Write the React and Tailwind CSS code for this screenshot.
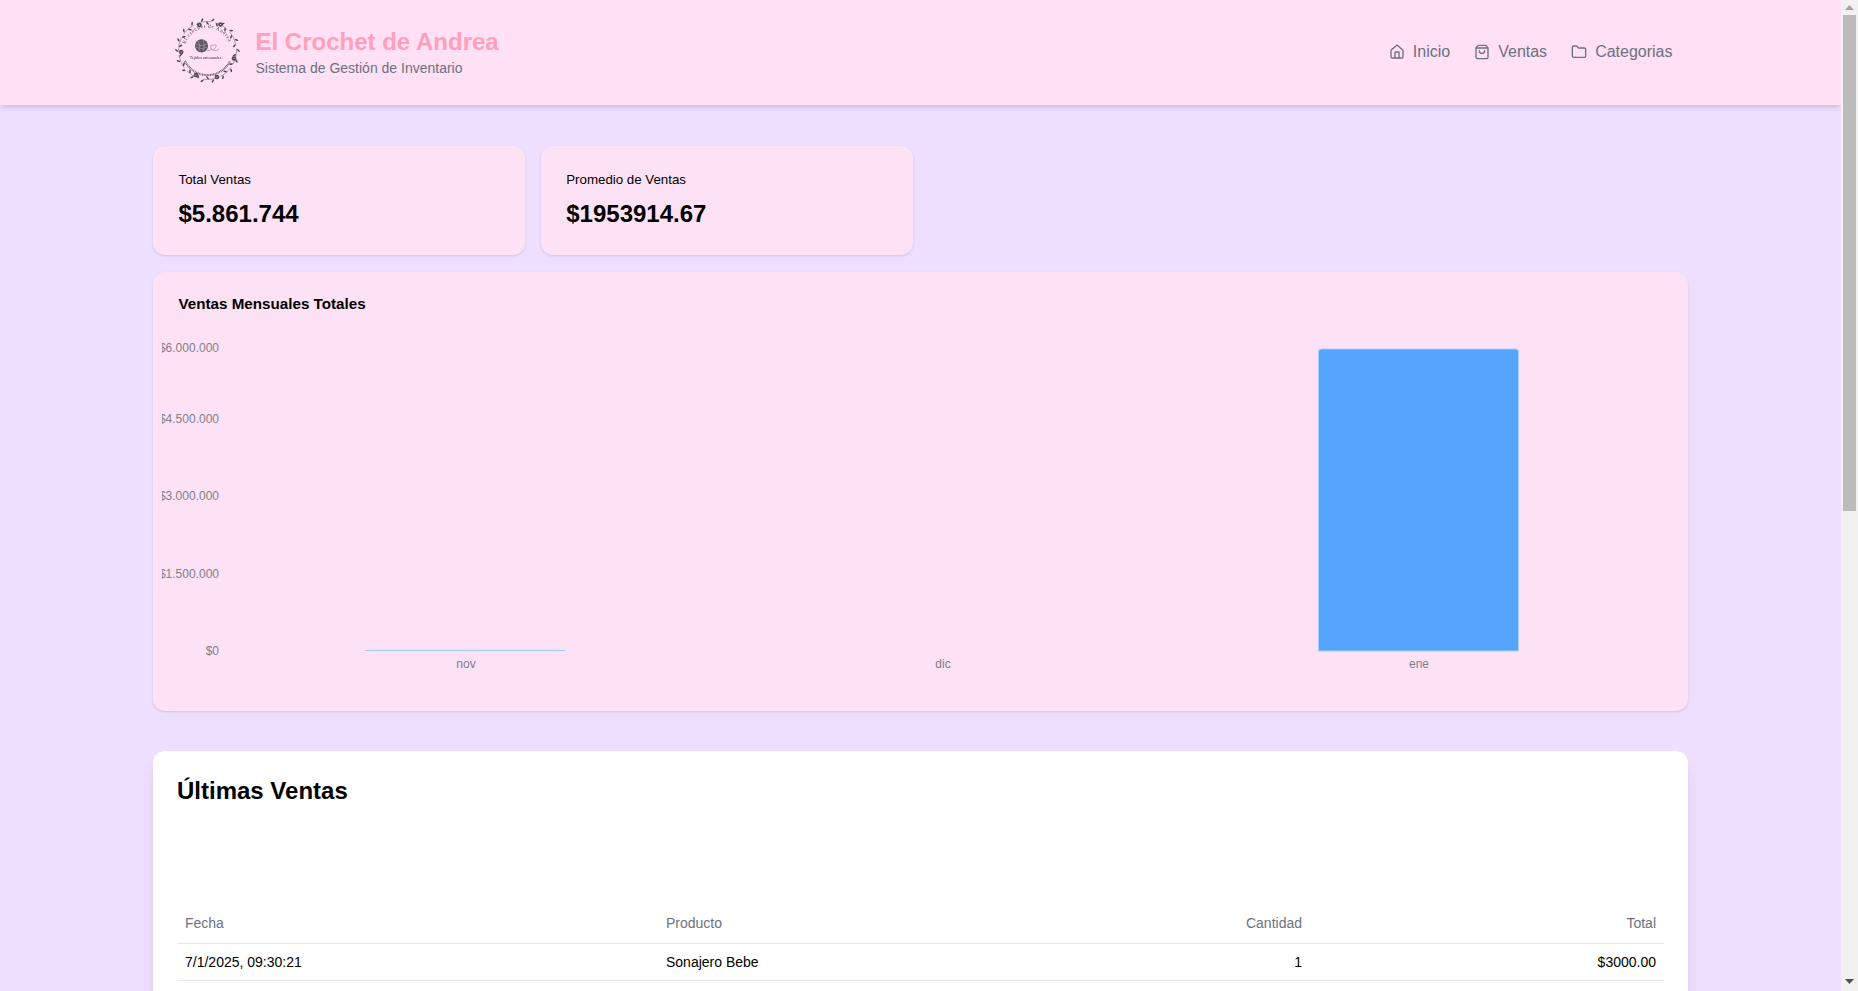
import React from "react";
import { House, ShoppingBag, Folder } from "lucide-react";

const font = { fontFamily: '"Liberation Sans", Arial, sans-serif' };

const navItems = [
  { name: "Inicio", icon: House },
  { name: "Ventas", icon: ShoppingBag },
  { name: "Categorias", icon: Folder },
];

const ventas = [
  { fecha: "7/1/2025, 09:30:21", producto: "Sonajero Bebe", cantidad: 1, total: "$3000.00" },
  { fecha: "6/1/2025, 18:12:44", producto: "Gorro de Lana", cantidad: 2, total: "$15000.00" },
  { fecha: "6/1/2025, 11:05:10", producto: "Bufanda Tejida", cantidad: 1, total: "$12000.00" },
  { fecha: "5/1/2025, 16:47:32", producto: "Amigurumi Conejo", cantidad: 1, total: "$18000.00" },
  { fecha: "4/1/2025, 10:20:05", producto: "Manta Bebe", cantidad: 1, total: "$35000.00" },
];

// wreath logo: thin branches with small leaves, flowers and the shop name
const Logo = () => {
  const leaves = Array.from({ length: 36 }, (_, i) => (i * 360) / 36);
  const flowers = [
    [30.5, 14],
    [51.5, 13.5],
    [12.2, 41],
    [65, 47.5],
    [27, 64],
    [48, 66],
  ];
  return (
    <svg viewBox="0 0 80 80" className="w-20 h-20 shrink-0 blur-[0.2px]">
      <defs>
        <path id="logoArcTop" d="M 16.5 33 A 23 23 0 0 1 60.5 33" />
      </defs>
      <circle cx="38.5" cy="39.5" r="29" fill="none" stroke="#5a5560" strokeWidth="0.5" strokeDasharray="14 4" />
      {leaves.map((a, i) => (
        <g key={a} transform={`rotate(${a} 38.5 39.5)`}>
          <ellipse
            cx="38.5"
            cy={i % 2 ? 8.6 : 12.2}
            rx="0.8"
            ry="1.9"
            fill="#4a4550"
            transform={`rotate(${i % 2 ? 40 : -40} 38.5 ${i % 2 ? 8.6 : 12.2})`}
          />
        </g>
      ))}
      {flowers.map(([x, y]) => (
        <g key={x}>
          <circle cx={x} cy={y} r="2.3" fill="#4f4a55" />
          <circle cx={x} cy={y} r="0.6" fill="#ffe0f4" />
        </g>
      ))}
      <text fontSize="5" fill="#3f3a45" fontFamily='"Liberation Serif", serif'>
        <textPath href="#logoArcTop" textLength="56">El crochet de Andrea</textPath>
      </text>
      <circle cx="32.5" cy="34.8" r="6.6" fill="#5e5963" />
      <path d="M27 33c3 2 8 2 11 0M27 36c3 2 8 2 11 0M29 30c2 3 2 7 1 10M34 29c1 3 2 7 0 11" stroke="#b8b0b8" strokeWidth="0.5" fill="none" />
      <path d="M38 39c2 1 3 0 5-1M44 39c-3-2-3-5-1-5 1 0 1 1 1 1s1-2 3-1c1 2-2 4-3 5 2 1 4 1 6-1" stroke="#6b6670" strokeWidth="0.5" fill="none" />
      <text x="36.5" y="48" fontSize="4.2" textAnchor="middle" fill="#2f2a35" fontFamily='"Liberation Serif", serif'>
        Tejidos artesanales
      </text>
      <path d="M16 50 A 25 25 0 0 0 61 50" fill="none" stroke="#4a4550" strokeWidth="2" strokeDasharray="1 0.6" opacity="0.8" />
    </svg>
  );
};

// page scrollbar as it looks in the reference
const Scrollbar = () => (
  <div className="fixed inset-y-0 right-0 w-[17px] bg-[#f1f1f1] pt-[15px] pl-[2px]">
    <svg width="9" height="5" viewBox="0 0 9 5" className="absolute top-[5px] left-[4px]">
      <polygon points="4.5,0 9,5 0,5" fill="#a3a3a3" />
    </svg>
    <div className="w-[13px] h-[496px] bg-[#bbbbbb]" />
    <svg width="9" height="5" viewBox="0 0 9 5" className="absolute bottom-[7px] left-[4px]">
      <polygon points="0,0 9,0 4.5,5" fill="#505050" />
    </svg>
  </div>
);

export default function App() {
  return (
    <div className="min-h-screen bg-[#efdfff] pr-[17px]" style={font}>
      <header className="bg-[#ffe0f4] shadow-md h-[105px]">
        <div className="container mx-auto px-4 h-full flex items-center justify-between">
          <div className="flex items-center gap-[7px] -mt-[3px]">
            <Logo />
            <div className="mt-[1px]">
              <h1 className="text-2xl font-bold text-[#ff9fbc]">El Crochet de Andrea</h1>
              <p className="text-sm text-gray-500">Sistema de Gestión de Inventario</p>
            </div>
          </div>
          <nav className="flex items-center gap-6 -mt-[2px]">
            {navItems.map((item) => (
              <a key={item.name} href="#" className="flex items-center gap-2 text-gray-500">
                <item.icon className="w-4 h-4" />
                {item.name}
              </a>
            ))}
          </nav>
        </div>
      </header>

      <main className="max-w-[1535px] mx-auto pt-[41px] pb-8">
        <div className="grid grid-cols-4 gap-4 mb-[17px]">
          <div className="bg-[#fde2f6] rounded-xl shadow py-6 pl-[25.5px] pr-6 h-[109px]">
            <p className="text-[13.3px] leading-5 text-black">Total Ventas</p>
            <p className="text-2xl font-bold text-black mt-2">$5.861.744</p>
          </div>
          <div className="bg-[#fde2f6] rounded-xl shadow py-6 pl-[25.5px] pr-6 h-[109px]">
            <p className="text-[13.3px] leading-5 text-black">Promedio de Ventas</p>
            <p className="text-2xl font-bold text-black mt-2">$1953914.67</p>
          </div>
        </div>

        <section className="bg-[#fde2f6] rounded-xl shadow h-[439px] pt-5 pb-6 px-6">
          <h2 className="text-[15.2px] leading-6 font-bold text-black pl-[1.5px]">Ventas Mensuales Totales</h2>
          <svg width="1510" height="350" className="block -ml-[15.5px] mt-[14px]">
            <g fontSize="12" fill="#7f7f86" textAnchor="end">
              <text x="57" y="22">$6.000.000</text>
              <text x="57" y="93">$4.500.000</text>
              <text x="57" y="170">$3.000.000</text>
              <text x="57" y="248">$1.500.000</text>
              <text x="57" y="325">$0</text>
            </g>
            <g fontSize="12" fill="#7f7f86" textAnchor="middle">
              <text x="304" y="338">nov</text>
              <text x="781" y="338">dic</text>
              <text x="1257" y="338">ene</text>
            </g>
            <line x1="203" x2="403" y1="320.5" y2="320.5" stroke="#a3c8f5" />
            <path
              d="M1156.5 321V22a3 3 0 0 1 3-3h194a3 3 0 0 1 3 3v299z"
              fill="#54a4fc"
              stroke="#a9cdf8"
              strokeWidth="1"
            />
          </svg>
        </section>

        <section className="bg-white rounded-xl shadow-lg mt-10 p-6">
          <h2 className="text-2xl font-bold text-black">Últimas Ventas</h2>
          <table className="w-full mt-[100px] text-sm">
            <thead>
              <tr className="border-b border-gray-200 text-gray-500 text-left">
                <th className="font-normal px-2 pt-1.5 pb-2.5 w-[481px]">Fecha</th>
                <th className="font-normal px-2 pt-1.5 pb-2.5">Producto</th>
                <th className="font-normal px-2 pt-1.5 pb-2.5 text-right w-[300px]">Cantidad</th>
                <th className="font-normal px-2 pt-1.5 pb-2.5 text-right w-[354px]">Total</th>
              </tr>
            </thead>
            <tbody>
              {ventas.map((v) => (
                <tr key={v.fecha} className="border-b border-gray-200 text-black">
                  <td className="px-2 py-2">{v.fecha}</td>
                  <td className="px-2 py-2">{v.producto}</td>
                  <td className="px-2 py-2 text-right">{v.cantidad}</td>
                  <td className="px-2 py-2 text-right">{v.total}</td>
                </tr>
              ))}
            </tbody>
          </table>
        </section>
      </main>

      <Scrollbar />
    </div>
  );
}
